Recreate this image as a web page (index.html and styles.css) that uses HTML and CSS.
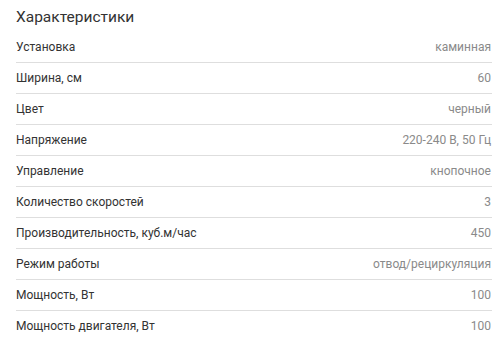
FILE: index.html
```html
<!DOCTYPE html>
<html lang="ru">
<head>
<meta charset="utf-8">
<link rel="stylesheet" href="styles.css">
</head>
<body>
<section class="specs">
  <h2 class="specs-title">Характеристики</h2>
  <ul class="specs-list">
    <li class="spec"><span class="spec-name">Установка</span><span class="spec-value">каминная</span></li>
    <li class="spec"><span class="spec-name">Ширина, см</span><span class="spec-value">60</span></li>
    <li class="spec"><span class="spec-name">Цвет</span><span class="spec-value">черный</span></li>
    <li class="spec"><span class="spec-name">Напряжение</span><span class="spec-value">220-240 В, 50 Гц</span></li>
    <li class="spec"><span class="spec-name">Управление</span><span class="spec-value">кнопочное</span></li>
    <li class="spec"><span class="spec-name">Количество скоростей</span><span class="spec-value">3</span></li>
    <li class="spec"><span class="spec-name">Производительность, куб.м/час</span><span class="spec-value">450</span></li>
    <li class="spec"><span class="spec-name">Режим работы</span><span class="spec-value">отвод/рециркуляция</span></li>
    <li class="spec"><span class="spec-name">Мощность, Вт</span><span class="spec-value">100</span></li>
    <li class="spec"><span class="spec-name">Мощность двигателя, Вт</span><span class="spec-value">100</span></li>
  </ul>
</section>
</body>
</html>
```

FILE: styles.css
```css
html, body {
  margin: 0;
  padding: 0;
  background: #ffffff;
}
body {
  font-family: Roboto, "Liberation Sans", sans-serif;
  color: #333333;
}
.specs {
  padding: 3px 8px 0 16px;
}
.specs-title {
  margin: 0;
  font-family: "Liberation Sans Narrow", Roboto, sans-serif;
  font-size: 15.5px;
  font-weight: 400;
  line-height: 29px;
  color: #333333;
}
.specs-list {
  list-style: none;
  margin: 0;
  padding: 0;
}
.spec {
  display: flex;
  justify-content: space-between;
  align-items: center;
  height: 30px;
  border-bottom: 1px solid #dedede;
  font-size: 12px;
}
.spec-name {
  color: #333333;
}
.spec-value {
  color: #8a8a8a;
  padding-right: 1px;
}
```
